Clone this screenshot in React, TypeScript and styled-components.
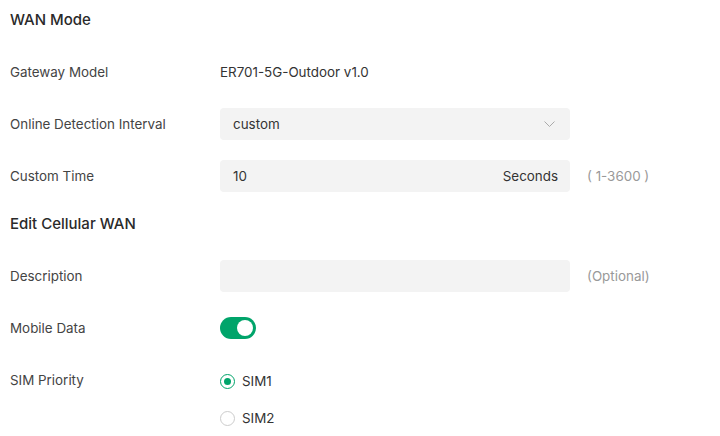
import React from "react";
import styled, { createGlobalStyle } from "styled-components";

const Global = createGlobalStyle`
  html, body { margin: 0; padding: 0; background: #fff; }
  body { font-family: Inter, "Noto Sans", sans-serif; color: #333; }
`;

const Page = styled.div`
  width: 720px;
  height: 436px;
  overflow: hidden;
  padding: 10px 10px 0;
  box-sizing: border-box;
`;

const SectionTitle = styled.div<{ $after: number }>`
  font-size: 15px;
  font-weight: 500;
  color: #2a2a2a;
  height: 20px;
  line-height: 20px;
  margin-bottom: ${(p) => p.$after}px;
`;

const Row = styled.div<{ $after: number }>`
  display: flex;
  align-items: center;
  height: 32px;
  margin-bottom: ${(p) => p.$after}px;
`;

const Label = styled.div`
  width: 210px;
  font-size: 13.4px;
  color: #444;
  flex-shrink: 0;
`;

const Value = styled.div`
  font-size: 13.4px;
  color: #333;
`;

const Field = styled.div<{ $padRight?: number }>`
  width: 350px;
  height: 32px;
  box-sizing: border-box;
  background: #f3f3f3;
  border-radius: 4px;
  display: flex;
  align-items: center;
  justify-content: space-between;
  padding: 0 ${(p) => p.$padRight ?? 12}px 0 13px;
  font-size: 13.4px;
  color: #333;
`;

const Hint = styled.div`
  margin-left: 17px;
  font-size: 13.4px;
  color: #999;
`;

const Toggle = styled.div`
  width: 36px;
  height: 22px;
  border-radius: 11px;
  background: #00a46a;
  position: relative;
  &::after {
    content: "";
    position: absolute;
    right: 3px;
    top: 3px;
    width: 16px;
    height: 16px;
    border-radius: 50%;
    background: #fff;
  }
`;

const SimBlock = styled.div`
  display: flex;
  align-items: flex-start;
`;

const SimLabel = styled(Label)`
  height: 32px;
  line-height: 32px;
`;

const RadioGroup = styled.div`
  display: flex;
  flex-direction: column;
  gap: 1px;
  margin-top: -1px;
`;

const RadioRow = styled.label`
  display: flex;
  align-items: center;
  gap: 7px;
  height: 36px;
  font-size: 13.4px;
  color: #333;
`;

const RadioDot = styled.span<{ $on?: boolean }>`
  width: 15px;
  height: 15px;
  box-sizing: border-box;
  border-radius: 50%;
  border: 1px solid ${(p) => (p.$on ? "#00a46a" : "#ccc")};
  display: flex;
  align-items: center;
  justify-content: center;
  &::after {
    content: "";
    width: 7px;
    height: 7px;
    border-radius: 50%;
    background: ${(p) => (p.$on ? "#00a46a" : "transparent")};
  }
`;

const Chevron = () => (
  <svg width="11" height="6" viewBox="0 0 11 6" fill="none">
    <path d="M0.5 0.5l5 5 5-5" stroke="#aaa" strokeWidth="1" />
  </svg>
);

export default function App() {
  return (
    <Page>
      <Global />
      <SectionTitle $after={26}>WAN Mode</SectionTitle>
      <Row $after={20}>
        <Label>Gateway Model</Label>
        <Value>ER701-5G-Outdoor v1.0</Value>
      </Row>
      <Row $after={20}>
        <Label>Online Detection Interval</Label>
        <Field $padRight={15}>
          <span>custom</span>
          <Chevron />
        </Field>
      </Row>
      <Row $after={22}>
        <Label>Custom Time</Label>
        <Field>
          <span>10</span>
          <span>Seconds</span>
        </Field>
        <Hint>( 1-3600 )</Hint>
      </Row>
      <SectionTitle $after={26}>Edit Cellular WAN</SectionTitle>
      <Row $after={20}>
        <Label>Description</Label>
        <Field />
        <Hint>(Optional)</Hint>
      </Row>
      <Row $after={20}>
        <Label>Mobile Data</Label>
        <Toggle />
      </Row>
      <SimBlock>
        <SimLabel>SIM Priority</SimLabel>
        <RadioGroup>
          <RadioRow>
            <RadioDot $on />
            SIM1
          </RadioRow>
          <RadioRow>
            <RadioDot />
            SIM2
          </RadioRow>
        </RadioGroup>
      </SimBlock>
    </Page>
  );
}
